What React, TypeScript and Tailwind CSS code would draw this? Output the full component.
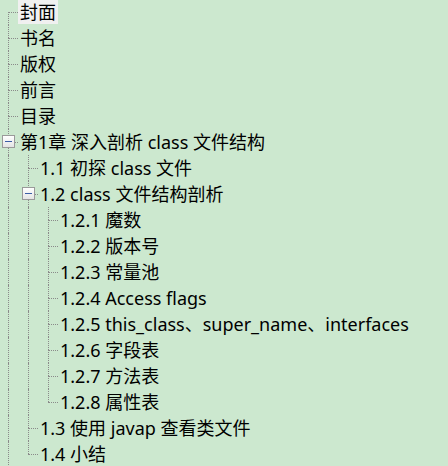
import React from "react";

type Node = {
  label: string;
  children?: Node[];
  selected?: boolean;
};

const tree: Node[] = [
  { label: "封面", selected: true },
  { label: "书名" },
  { label: "版权" },
  { label: "前言" },
  { label: "目录" },
  {
    label: "第1章 深入剖析 class 文件结构",
    children: [
      { label: "1.1 初探 class 文件" },
      {
        label: "1.2 class 文件结构剖析",
        children: [
          { label: "1.2.1 魔数" },
          { label: "1.2.2 版本号" },
          { label: "1.2.3 常量池" },
          { label: "1.2.4 Access flags" },
          { label: "1.2.5 this_class、super_name、interfaces" },
          { label: "1.2.6 字段表" },
          { label: "1.2.7 方法表" },
          { label: "1.2.8 属性表" },
        ],
      },
      { label: "1.3 使用 javap 查看类文件" },
      { label: "1.4 小结" },
    ],
  },
];

type Row = {
  node: Node;
  trail: boolean[]; // does the ancestor at each level keep going below this row
  first: boolean;
  last: boolean;
};

// chapter 1 has more siblings below the visible area, so root rows never end
function flatten(nodes: Node[], trail: boolean[], out: Row[], root = false) {
  nodes.forEach((node, i) => {
    const last = root ? false : i === nodes.length - 1;
    out.push({ node, trail, first: root && i === 0, last });
    if (node.children) flatten(node.children, [...trail, !last], out);
  });
  return out;
}

const rows = flatten(tree, [], [], true);

const ExpandBox = () => (
  <div className="absolute left-[2px] top-[6px] z-10 flex h-[13px] w-[13px] items-center justify-center border border-[#9a9a9a] bg-gradient-to-b from-white to-[#e4e4e4]">
    <div className="h-px w-[7px] bg-[#3b5ea6]" />
  </div>
);

const Connector = ({ row }: { row: Row }) => (
  <div className="relative h-full w-5 shrink-0">
    {!row.first && <div className="absolute left-2 top-0 h-[13px] border-l border-dotted border-[#8a8a8a]" />}
    {!row.last && <div className="absolute bottom-0 left-2 top-[13px] border-l border-dotted border-[#8a8a8a]" />}
    <div className="absolute left-2 top-[13px] w-[10px] border-t border-dotted border-[#8a8a8a]" />
    {row.node.children && <ExpandBox />}
  </div>
);

export default function App() {
  return (
    <div className="h-[466px] w-[448px] overflow-hidden bg-[#cce8cf] font-['Noto_Sans','Noto_Sans_CJK_SC',sans-serif] text-[18px] text-black">
      <div className="-mt-px">
        {rows.map((row, i) => (
          <div key={i} className="flex h-[26px] items-stretch">
            {row.trail.map((on, j) => (
              <div key={j} className="relative h-full w-5 shrink-0">
                {on && <div className="absolute bottom-0 left-2 top-0 border-l border-dotted border-[#8a8a8a]" />}
              </div>
            ))}
            <Connector row={row} />
            <div className="flex items-center">
              <span
                className={`-ml-0.5 whitespace-nowrap px-0.5 leading-[24px] ${
                  row.node.selected ? "bg-[#f0f0f0]" : ""
                }`}
              >
                {row.node.label}
              </span>
            </div>
          </div>
        ))}
      </div>
    </div>
  );
}
